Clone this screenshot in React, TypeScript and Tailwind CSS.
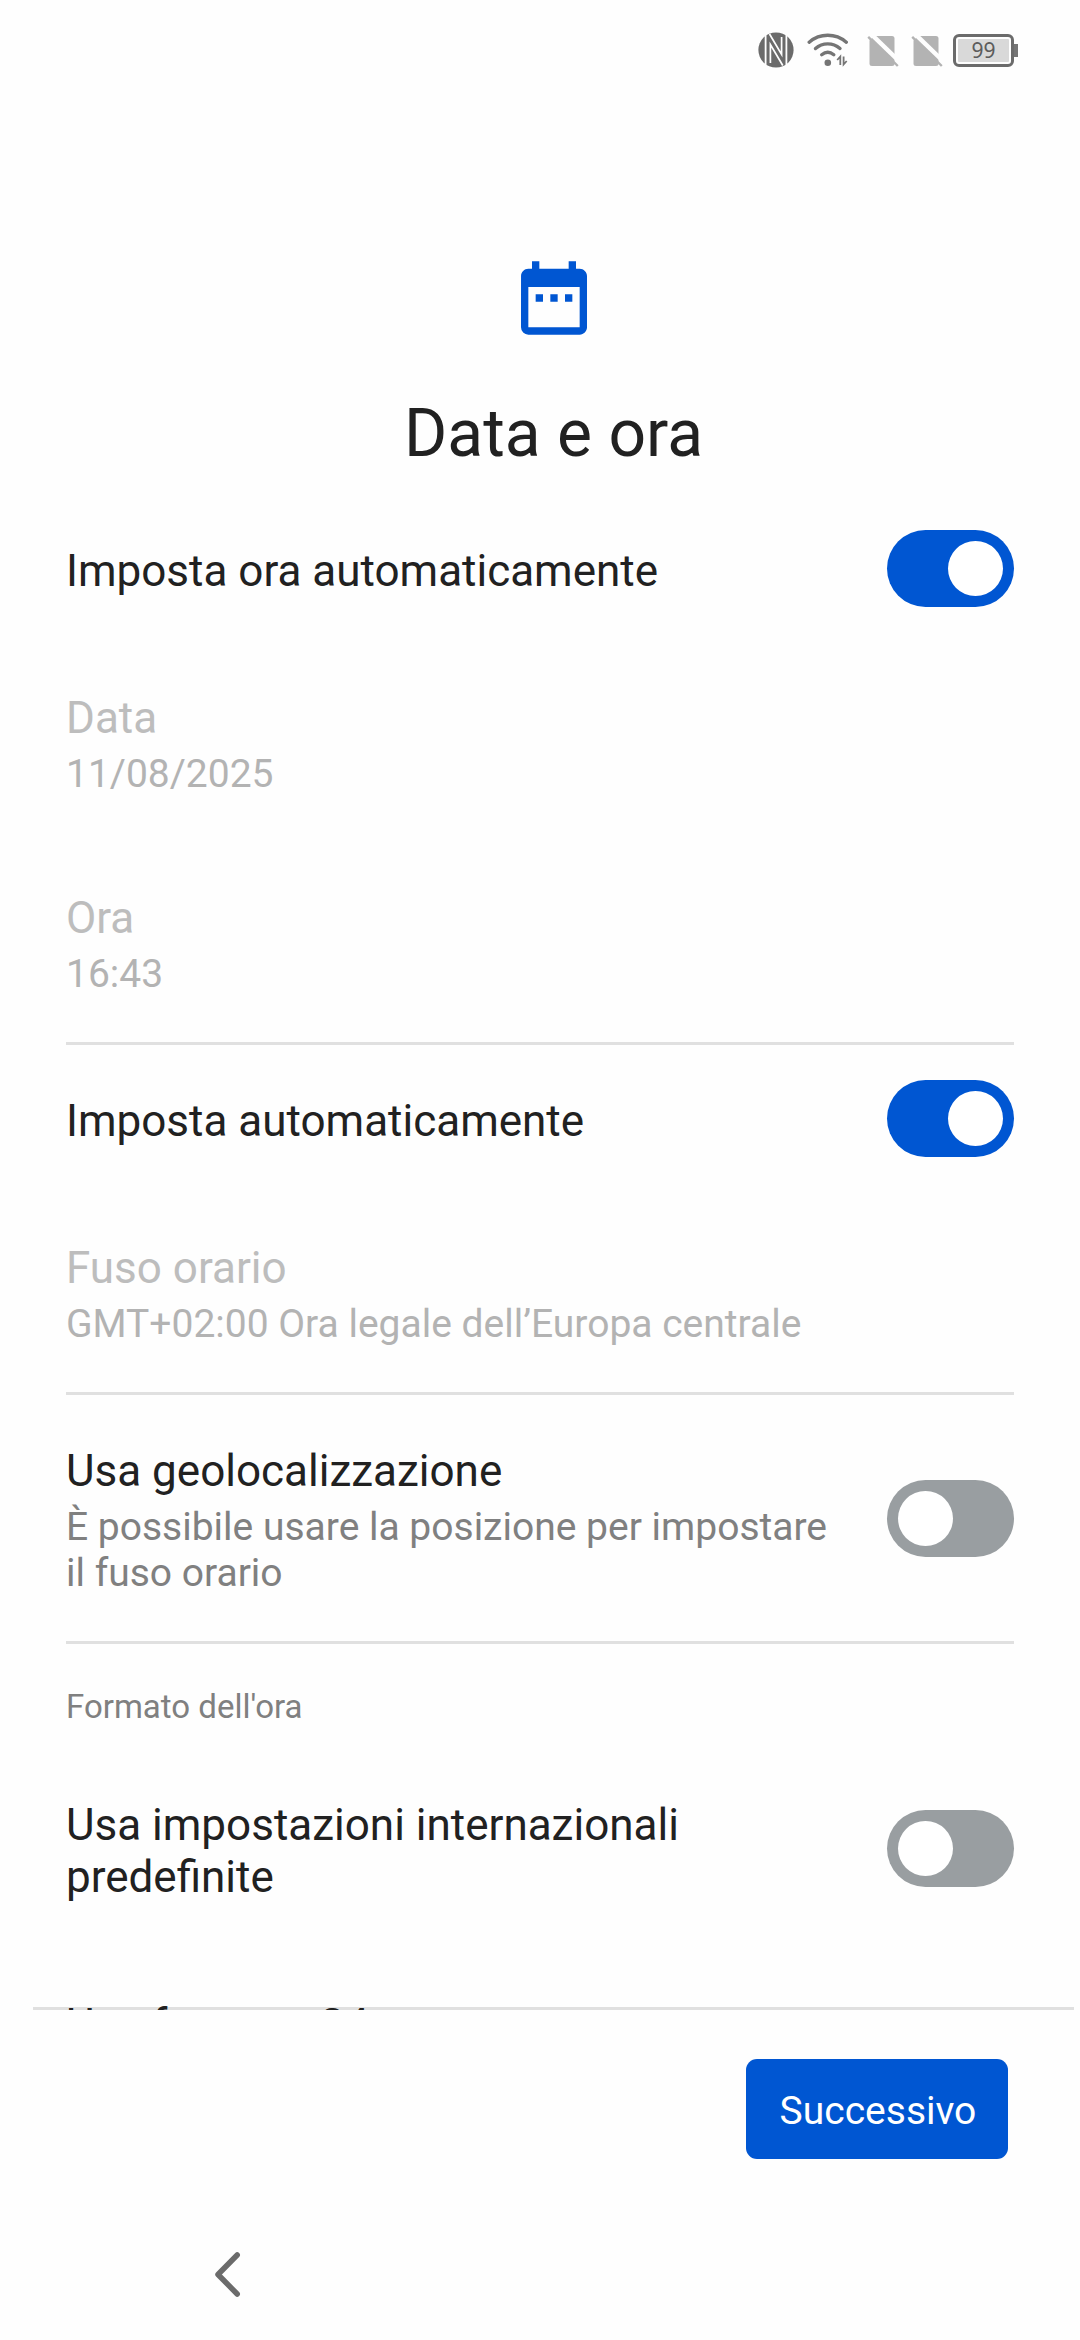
import type { ReactNode } from "react";
import { MdDateRange } from "react-icons/md";

function NfcIcon() {
  return (
    <svg className="h-9 w-9" viewBox="0 0 36 36" fill="none">
      <circle cx="18" cy="18" r="17.600" fill="#6b6b6b" />
      <path d="M7.600 3V33M28.400 3V33" stroke="#fefefe" strokeWidth="1.800" />
      <path d="M11.500 2L23.600 22.500V5" stroke="#fefefe" strokeWidth="1.700" />
      <path d="M12.400 31V12.500L24.800 33.500" stroke="#fefefe" strokeWidth="1.700" />
    </svg>
  );
}

function WifiIcon() {
  return (
    <svg className="h-9 w-[42px]" viewBox="0 0 42 36" fill="none" stroke="#757575" strokeWidth="3.4" strokeLinecap="round">
      <path d="M2.200 10.200C13 1 28.500 1 39.300 10.200" />
      <path d="M8.500 16.500C15.500 10.300 25.900 10.300 33 16.500" />
      <path d="M14.700 22.700C18.500 19.600 23 19.600 26.800 22.700" />
      <circle cx="20.800" cy="30.800" r="3.300" fill="#757575" stroke="none" />
      <path d="M33.300 33V24.500L30.200 28M36.600 24.500V32.500L39.700 29" strokeWidth="1.800" strokeLinecap="butt" />
    </svg>
  );
}

function NoSimIcon() {
  return (
    <svg className="h-8 w-8" viewBox="0 0 32 32">
      <path d="M7.500 1H25Q27.500 1 27.500 3.500V28.500Q27.500 31 25 31H5Q2.500 31 2.500 28.500V5.500Z" fill="#b3b3b3" />
      <path d="M3.500 -1.500L33.500 27.500" stroke="#fefefe" strokeWidth="4.500" />
      <path d="M1.200 1.800L30.800 31" stroke="#b3b3b3" strokeWidth="2.400" />
    </svg>
  );
}

function Battery() {
  return (
    <div className="flex items-center">
      <div className="flex h-[33px] w-[61px] rounded-[6px] border-[3px] border-[#6b6b6b] p-[2px]">
        <div className="flex flex-1 items-center justify-center rounded-[1px] bg-[#d9d9d9] font-['Noto_Sans'] text-[21px] leading-none text-[#5c5c5c]">
          99
        </div>
      </div>
      <div className="h-[13px] w-[4px] bg-[#757575]" />
    </div>
  );
}

function Toggle({ on, className }: { on: boolean; className: string }) {
  return (
    <div
      role="switch"
      aria-checked={on}
      className={`flex h-[77px] w-[127px] shrink-0 items-center rounded-full px-[11px] ${
        on ? "justify-end bg-[#0056d2]" : "justify-start bg-[#999ea1]"
      } ${className}`}
    >
      <div className="h-[55px] w-[55px] rounded-full bg-white" />
    </div>
  );
}

function Row({
  title,
  summary,
  height,
  disabled = false,
  children,
}: {
  title: ReactNode;
  summary?: ReactNode;
  height: string;
  disabled?: boolean;
  children?: ReactNode;
}) {
  return (
    <div className={`flex shrink-0 justify-between ${height}`}>
      <div className="pt-[50px]">
        <div className={`text-[44px] leading-[52px] ${disabled ? "text-[#bdbdbd]" : "text-[#212121]"}`}>{title}</div>
        {summary && (
          <div className={`mt-[7px] text-[39px] leading-[46px] ${disabled ? "text-[#b3b3b3]" : "text-[#808080]"}`}>
            {summary}
          </div>
        )}
      </div>
      {children}
    </div>
  );
}

function Divider() {
  return <div className="h-[3px] shrink-0 bg-[#e0e0e0]" />;
}

export default function App() {
  return (
    <div className="flex h-[2340px] w-[1080px] flex-col overflow-hidden bg-[#fefefe] font-[Roboto,sans-serif]">
      <div className="flex h-[100px] shrink-0 items-center justify-end pr-[62px]">
        <NfcIcon />
        <div className="ml-[13px]"><WifiIcon /></div>
        <div className="ml-[18px] pt-[2px]"><NoSimIcon /></div>
        <div className="ml-[12px] pt-[2px]"><NoSimIcon /></div>
        <div className="ml-[10px]"><Battery /></div>
      </div>

      <main className="mr-[6px] ml-[33px] flex h-[1910px] shrink-0 flex-col overflow-hidden">
        <header className="flex h-[395px] shrink-0 flex-col items-center pt-[154px]">
          <MdDateRange className="h-[88px] w-[88px] text-[#0056d2]" />
          <h1 className="mt-[53px] text-[66px] leading-[77px] text-[#212121]">Data e ora</h1>
        </header>
        <div className="flex shrink-0 flex-col pr-[60px] pl-[33px]">
          <Row title="Imposta ora automaticamente" height="h-[147px]">
            <Toggle on className="mt-[35px]" />
          </Row>
          <Row title="Data" summary="11/08/2025" height="h-[200px]" disabled />
          <Row title="Ora" summary="16:43" height="h-[200px]" disabled />
          <Divider />
          <Row title="Imposta automaticamente" height="h-[147px]">
            <Toggle on className="mt-[35px]" />
          </Row>
          <Row title="Fuso orario" summary="GMT+02:00 Ora legale dell’Europa centrale" height="h-[200px]" disabled />
          <Divider />
          <Row
            title="Usa geolocalizzazione"
            summary={<>È possibile usare la posizione per impostare<br />il fuso orario</>}
            height="h-[246px]"
          >
            <Toggle on={false} className="mt-[85px]" />
          </Row>
          <Divider />
          <div className="h-[105px] pt-[43px] text-[33px] leading-[39px] text-[#808080]">Formato dell'ora</div>
          <Row title={<>Usa impostazioni internazionali<br />predefinite</>} height="h-[199px]">
            <Toggle on={false} className="mt-[61px]" />
          </Row>
        </div>
        <div className="h-[62px] shrink-0 overflow-hidden bg-[linear-gradient(#e0e0e0,#e0e0e0)] bg-[length:100%_3px] bg-bottom bg-no-repeat pt-px pl-[33px]">
          <Row title="Usa formato 24 ore" height="h-[147px]" />
        </div>
      </main>
      <footer className="flex h-[198px] shrink-0 justify-end pt-[49px] pr-[72px]">
        <button className="h-[100px] w-[262px] rounded-[11px] bg-[#0056d2] pt-[3px] pl-[2px] text-[39px] leading-[46px] text-white">
          Successivo
        </button>
      </footer>
      <nav className="flex flex-1 pt-[42px] pl-[212px]">
        <svg className="h-[50px] w-[30px]" viewBox="0 0 30 50" fill="none">
          <path d="M25.200 5L6 24.500L25.200 44" stroke="#6b6b6b" strokeWidth="5.500" strokeLinecap="round" strokeLinejoin="round" />
        </svg>
      </nav>
    </div>
  );
}
